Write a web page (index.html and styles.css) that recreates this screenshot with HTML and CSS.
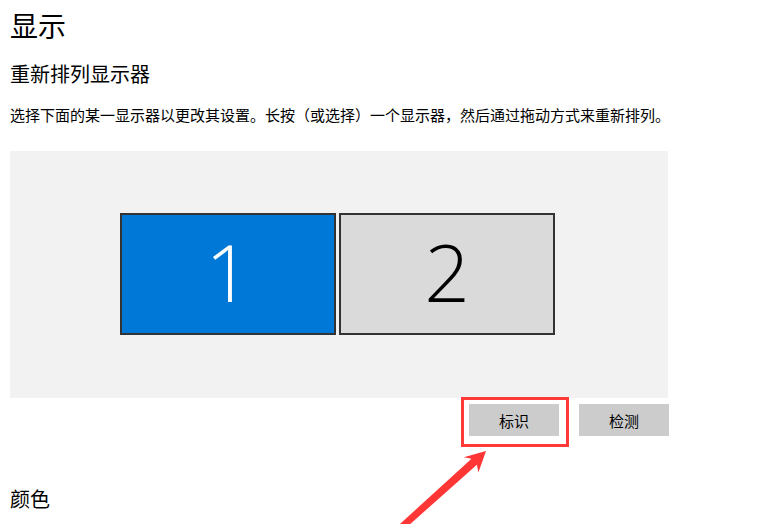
FILE: index.html
```html
<!DOCTYPE html>
<html lang="zh-CN">
<head>
<meta charset="utf-8">
<title>显示</title>
<link rel="stylesheet" href="styles.css">
</head>
<body>
<main class="page">
  <h1 class="title">显示</h1>
  <h2 class="subtitle">重新排列显示器</h2>
  <p class="desc">选择下面的某一显示器以更改其设置。长按（或选择）一个显示器，然后通过拖动方式来重新排列。</p>
  <div class="canvas">
    <div class="monitor monitor-active">1</div>
    <div class="monitor">2</div>
  </div>
  <div class="actions">
    <button class="btn">标识</button>
    <button class="btn">检测</button>
  </div>
  <h2 class="section">颜色</h2>
</main>
<div class="highlight"></div>
<svg class="arrow" width="759" height="524" viewBox="0 0 759 524" aria-hidden="true">
  <polygon points="486,451 478.4,472.5 476.9,464.8 391.7,540.5 387.1,535.7 471.5,458.8 463.8,457.2" fill="#ff3636"/>
</svg>
</body>
</html>
```

FILE: styles.css
```css
html, body {
  margin: 0;
  padding: 0;
  background: #ffffff;
  overflow: hidden;
}

body {
  width: 759px;
  height: 524px;
  font-family: "Noto Sans CJK SC", "Noto Sans", sans-serif;
  color: #000000;
  position: relative;
}

.page {
  padding: 5px 0 0 10px;
}

.title {
  margin: 0;
  font-size: 28px;
  font-weight: 400;
  line-height: 40px;
}

.subtitle {
  margin: 15px 0 0 0;
  font-size: 20px;
  font-weight: 400;
  line-height: 28px;
}

.desc {
  margin: 17px 0 0 0;
  font-size: 15px;
  line-height: 20px;
  white-space: nowrap;
}

.canvas {
  margin-top: 26px;
  width: 658px;
  height: 247px;
  box-sizing: border-box;
  background: #f1f2f1;
  padding: 62px 0 0 110px;
  display: flex;
  gap: 3px;
  align-items: flex-start;
}

.monitor {
  width: 216px;
  height: 122px;
  box-sizing: border-box;
  border: 2px solid #333333;
  background: #dadada;
  color: #000000;
  display: flex;
  align-items: center;
  justify-content: center;
  font-family: "Open Sans", "Lato", "Noto Sans", sans-serif;
  font-weight: 300;
  font-size: 80px;
  line-height: 1;
  padding-bottom: 6px;
}

.monitor-active {
  background: #0078d7;
  color: #ffffff;
}

.actions {
  width: 659px;
  margin-top: 6px;
  display: flex;
  justify-content: flex-end;
  gap: 20px;
}

.btn {
  width: 90px;
  height: 32px;
  border: none;
  background: #cccccc;
  font-family: "Noto Sans CJK SC", "Noto Sans", sans-serif;
  font-size: 15px;
  color: #000000;
  padding: 0;
}

.section {
  margin: 49px 0 0 0;
  font-size: 20px;
  font-weight: 400;
  line-height: 28px;
}

.highlight {
  position: absolute;
  left: 461px;
  top: 397px;
  width: 108px;
  height: 50px;
  box-sizing: border-box;
  border: 3px solid #ff3838;
}

.arrow {
  position: absolute;
  left: 0;
  top: 0;
  pointer-events: none;
}
```
